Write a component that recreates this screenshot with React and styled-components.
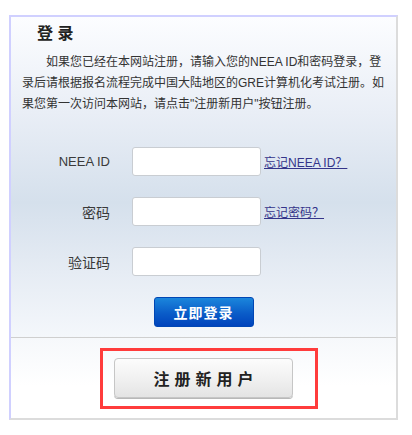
import React from "react";
import styled, { createGlobalStyle } from "styled-components";

const GlobalStyle = createGlobalStyle`
  body {
    margin: 0;
    background: #ffffff;
    font-family: "Liberation Sans", "Noto Sans CJK SC", sans-serif;
    color: #333333;
  }
`;

const App = () => {
  return (
    <Page>
      <GlobalStyle />
      <Card>
        <LoginSection>
          <Title>登 录</Title>
          <Intro>
            如果您已经在本网站注册，请输入您的NEEA ID和密码登录，登录后请根据报名流程完成中国大陆地区的GRE计算机化考试注册。如果您第一次访问本网站，请点击"注册新用户"按钮注册。
          </Intro>
          <Form>
            <Row>
              <Label $latin>NEEA ID</Label>
              <Input type="text" />
              <Forgot href="#">忘记NEEA ID？</Forgot>
            </Row>
            <Row>
              <Label>密码</Label>
              <Input type="password" />
              <Forgot href="#">忘记密码？</Forgot>
            </Row>
            <Row>
              <Label>验证码</Label>
              <Input type="text" />
            </Row>
          </Form>
          <LoginButton>立即登录</LoginButton>
        </LoginSection>
        <RegisterSection>
          <RegisterWrap>
            <RegisterButton>注册新用户</RegisterButton>
            <Highlight />
          </RegisterWrap>
        </RegisterSection>
      </Card>
    </Page>
  );
};

export default App;

const Page = styled.div`
  padding: 15px 0 0 9px;
`;

const Card = styled.div`
  width: 389px;
  box-sizing: border-box;
  border: 2px solid #dcdcdc;
  border-top-color: #d0d0ff;
  border-left-color: #d0d0ff;
  display: flex;
  flex-direction: column;
`;

const LoginSection = styled.div`
  padding: 5px 11px 10px 11px;
  display: flex;
  flex-direction: column;
  border-bottom: 1px solid #cfcfcf;
  background: linear-gradient(
    #fcfdff 0%,
    #e9eef6 30%,
    #d5e0ec 58%,
    #e6ecf4 80%,
    #f4f7fb 100%
  );
`;

const Title = styled.h2`
  margin: 0;
  padding-left: 15px;
  font-size: 16px;
  line-height: 24px;
  font-weight: bold;
  color: #222222;
`;

const Intro = styled.p`
  margin: 6px 0 0;
  width: 366px;
  font-size: 12px;
  line-height: 21px;
  text-indent: 24px;
  color: #333333;
`;

const Form = styled.div`
  margin-top: 32px;
  display: flex;
  flex-direction: column;
  gap: 21px;
`;

const Row = styled.div`
  display: flex;
  align-items: center;
  height: 29px;
`;

const Label = styled.span`
  width: 88px;
  margin-right: 22px;
  text-align: right;
  font-size: ${(p) => (p.$latin ? "13px" : "14px")};
  color: #3a3a3a;
`;

const Input = styled.input`
  width: 129px;
  height: 29px;
  box-sizing: border-box;
  border: 1px solid #c9cdd2;
  border-radius: 3px;
  background: #ffffff;
  padding: 0 4px;
  outline: none;
`;

const Forgot = styled.a`
  margin-left: 3px;
  font-size: 12px;
  color: #34348a;
  text-decoration: underline;
`;

const LoginButton = styled.button`
  align-self: center;
  margin-top: 21px;
  width: 100px;
  height: 30px;
  border: 1px solid #0046b4;
  border-radius: 3px;
  background: linear-gradient(#1b86dc, #0a5cc8 55%, #0043bc);
  color: #ffffff;
  font-family: "Liberation Sans", "Noto Sans CJK SC", sans-serif;
  font-size: 14px;
  font-weight: bold;
  letter-spacing: 1px;
  padding: 0;
  cursor: pointer;
`;

const RegisterSection = styled.div`
  height: 80px;
  display: flex;
  justify-content: center;
  align-items: center;
  background: linear-gradient(#f6f8fb, #ffffff 60%);
`;

const RegisterWrap = styled.div`
  position: relative;
  display: flex;
`;

const RegisterButton = styled.button`
  width: 179px;
  height: 40px;
  box-sizing: border-box;
  border: 1px solid #c6c6c6;
  border-radius: 4px;
  background: linear-gradient(#fcfcfc, #f1f1f1 50%, #e4e4e4);
  box-shadow: 0 1px 0 #b8b8b8;
  color: #222222;
  font-family: "Liberation Sans", "Noto Sans CJK SC", sans-serif;
  font-size: 16px;
  font-weight: bold;
  letter-spacing: 5px;
  padding: 0 0 0 5px;
  cursor: pointer;
`;

const Highlight = styled.div`
  position: absolute;
  top: -10px;
  left: -14px;
  right: -25px;
  bottom: -11px;
  border: 3px solid #ff3c3c;
  pointer-events: none;
`;
